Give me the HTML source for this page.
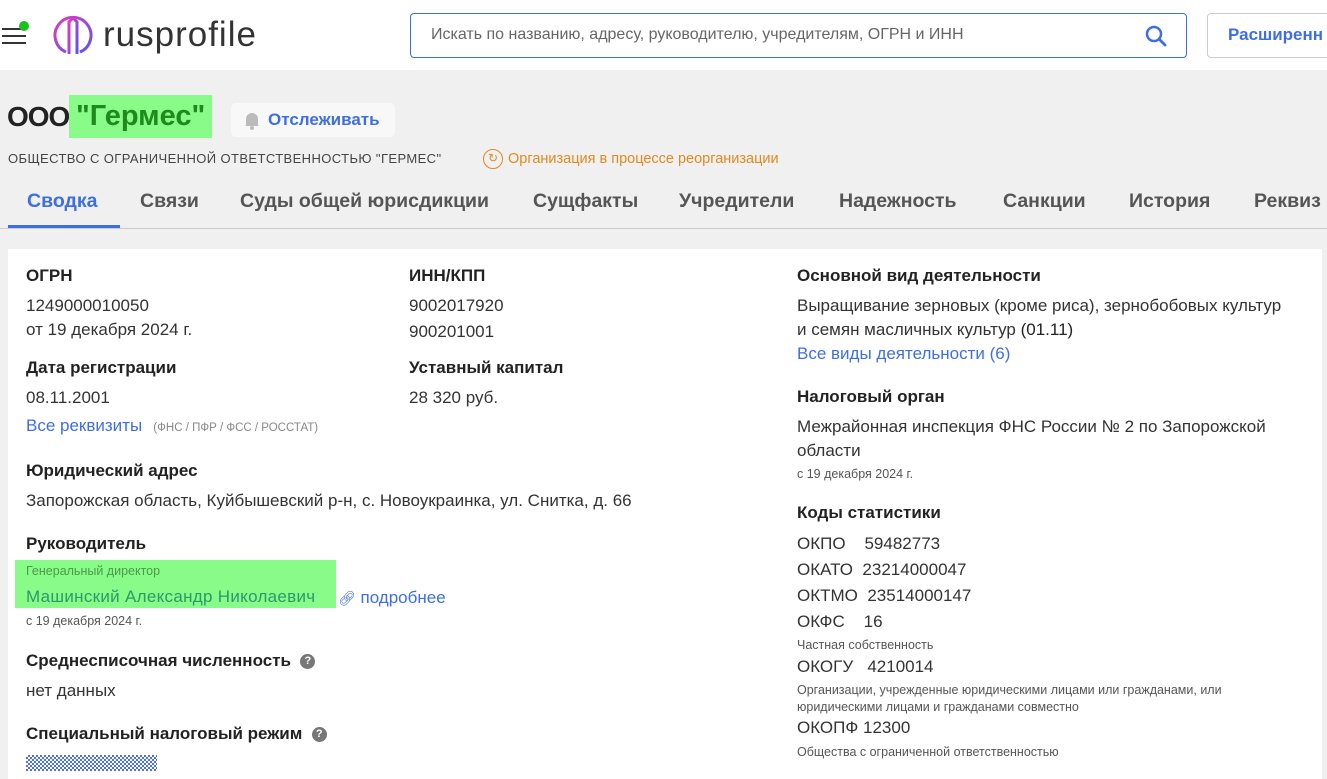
<!DOCTYPE html>
<html><head><meta charset="utf-8"><style>
*{margin:0;padding:0;box-sizing:border-box}
body{width:1327px;height:773px;overflow:hidden;background:#f0f0f0;font-family:"Liberation Sans","Noto Sans CJK SC",sans-serif;color:#222;position:relative}
.a{position:absolute;white-space:nowrap}
.h{font-weight:bold;font-size:17px;color:#222}
.t{font-size:17px;color:#333}
.s{font-size:12.5px;color:#555}
.l{color:#3d6fe0}
.tab{font-size:19.5px;font-weight:bold;color:#555;top:190px}
</style></head><body>
<div class="a" style="left:0;top:0;width:1327px;height:70px;background:#fff"></div>
<div class="a" style="left:2px;top:28px;width:24px;height:2px;background:#333"></div>
<div class="a" style="left:2px;top:35px;width:24px;height:2px;background:#333"></div>
<div class="a" style="left:2px;top:42px;width:24px;height:2px;background:#333"></div>
<div class="a" style="left:19px;top:21px;width:10px;height:10px;border-radius:50%;background:#1bc21b"></div>
<svg class="a" style="left:52px;top:14px" width="42" height="42" viewBox="0 0 42 42"><defs><linearGradient id="g" x1="0" y1="0" x2="1" y2="1"><stop offset="0" stop-color="#e63ab8"/><stop offset="1" stop-color="#5a55f0"/></linearGradient></defs><path d="M14 38 A18 18 0 1 1 28 38" fill="none" stroke="url(#g)" stroke-width="3"/><path d="M17 40 L17 8 L21 4 L25 8 L25 40" fill="none" stroke="url(#g)" stroke-width="3"/></svg>
<div class="a" style="left:103px;top:15px;font-size:35px;color:#333;letter-spacing:1px">rusprofile</div>
<div class="a" style="left:410px;top:13px;width:777px;height:45px;border:1px solid #3d6fe0;border-radius:4px;background:#fff"></div>
<div class="a" style="left:431px;top:26px;font-size:16px;color:#666">Искать по названию, адресу, руководителю, учредителям, ОГРН и ИНН</div>
<svg class="a" style="left:1144px;top:24px" width="24" height="24" viewBox="0 0 24 24"><circle cx="10" cy="10" r="7" fill="none" stroke="#3d6fe0" stroke-width="2.5"/><path d="M15 15 L21 21" stroke="#3d6fe0" stroke-width="2.8" stroke-linecap="round"/></svg>
<div class="a" style="left:1207px;top:13px;width:140px;height:45px;border:1px solid #ccc;border-radius:4px;background:#fff"></div>
<div class="a" style="left:1228px;top:25px;font-size:17px;font-weight:bold;color:#3d6fe0">Расширенн</div>

<div class="a" style="left:7px;top:101px;font-size:28px;font-weight:bold;color:#222;letter-spacing:-1px">ООО</div>
<div class="a" style="left:69px;top:95px;width:143px;height:43px;background:#88fb88"></div>
<div class="a" style="left:76px;top:100px;font-size:29px;font-weight:bold;color:#1e8a1e">"Гермес"</div>
<div class="a" style="left:231px;top:103px;width:164px;height:34px;background:#f8f8f8;border-radius:5px"></div>
<svg class="a" style="left:242px;top:110px" width="20" height="20" viewBox="0 0 20 20"><path d="M4 15 L4 9 A6 6 0 0 1 16 9 L16 15 L17 16 L3 16 Z" fill="#bbb"/><circle cx="10" cy="18" r="2" fill="#bbb"/></svg>
<div class="a" style="left:268px;top:110px;font-size:17px;font-weight:bold;color:#3d6fe0">Отслеживать</div>
<div class="a" style="left:8px;top:151px;font-size:13px;color:#444;letter-spacing:0.4px">ОБЩЕСТВО С ОГРАНИЧЕННОЙ ОТВЕТСТВЕННОСТЬЮ "ГЕРМЕС"</div>
<div class="a" style="left:483px;top:149px;width:20px;height:20px;border:1.5px solid #e08a1e;border-radius:50%;color:#e08a1e;font-size:12px;text-align:center;line-height:17px">↻</div>
<div class="a" style="left:508px;top:151px;font-size:14.5px;color:#e08a1e">Организация в процессе реорганизации</div>

<div class="a tab" style="left:27px;color:#3d6fe0">Сводка</div>
<div class="a" style="left:8px;top:225px;width:112px;height:3px;background:#3d6fe0"></div>
<div class="a tab" style="left:140px">Связи</div>
<div class="a tab" style="left:240px">Суды общей юрисдикции</div>
<div class="a tab" style="left:533px">Сущфакты</div>
<div class="a tab" style="left:679px">Учредители</div>
<div class="a tab" style="left:839px">Надежность</div>
<div class="a tab" style="left:1003px">Санкции</div>
<div class="a tab" style="left:1129px">История</div>
<div class="a tab" style="left:1254px">Реквиз</div>
<div class="a" style="left:0;top:228px;width:1327px;height:1px;background:#ccc"></div>

<div class="a" style="left:8px;top:249px;width:1314px;height:530px;background:#fff"></div>

<div class="a h" style="left:26px;top:266px">ОГРН</div>
<div class="a t" style="left:26px;top:296px">1249000010050</div>
<div class="a t" style="left:26px;top:320px">от 19 декабря 2024 г.</div>
<div class="a h" style="left:26px;top:358px">Дата регистрации</div>
<div class="a t" style="left:26px;top:388px">08.11.2001</div>
<div class="a t l" style="left:26px;top:416px">Все реквизиты <span style="font-size:11.5px;color:#888">&nbsp;&nbsp;(ФНС / ПФР / ФСС / РОССТАТ)</span></div>
<div class="a h" style="left:26px;top:461px">Юридический адрес</div>
<div class="a t" style="left:26px;top:491px">Запорожская область, Куйбышевский р-н, с. Новоукраинка, ул. Снитка, д. 66</div>
<div class="a h" style="left:26px;top:534px">Руководитель</div>
<div class="a" style="left:15px;top:560px;width:321px;height:48px;background:#88fb88"></div>
<div class="a s" style="left:26px;top:564px;color:#4a9a4a">Генеральный директор</div>
<div class="a t" style="left:26px;top:587px;color:#2a9a6a;letter-spacing:0.3px">Машинский Александр Николаевич</div>
<div class="a t l" style="left:338px;top:588px"><span style="font-size:14px">🔗︎</span> подробнее</div>
<div class="a s" style="left:26px;top:614px">с 19 декабря 2024 г.</div>
<div class="a h" style="left:26px;top:651px">Среднесписочная численность&nbsp; <span style="display:inline-block;width:15px;height:15px;border-radius:50%;background:#777;color:#fff;font-size:11px;text-align:center;line-height:15px;vertical-align:2px">?</span></div>
<div class="a t" style="left:26px;top:681px">нет данных</div>
<div class="a h" style="left:26px;top:724px">Специальный налоговый режим&nbsp; <span style="display:inline-block;width:15px;height:15px;border-radius:50%;background:#777;color:#fff;font-size:11px;text-align:center;line-height:15px;vertical-align:2px">?</span></div>
<div class="a" style="left:26px;top:755px;width:131px;height:16px;background:repeating-conic-gradient(#4a6ff0 0 25%,#fff 0 50%) 0 0/4px 4px"></div>

<div class="a h" style="left:409px;top:266px">ИНН/КПП</div>
<div class="a t" style="left:409px;top:296px">9002017920</div>
<div class="a t" style="left:409px;top:322px">900201001</div>
<div class="a h" style="left:409px;top:358px">Уставный капитал</div>
<div class="a t" style="left:409px;top:388px">28 320 руб.</div>

<div class="a h" style="left:797px;top:266px">Основной вид деятельности</div>
<div class="a t" style="left:797px;top:296px">Выращивание зерновых (кроме риса), зернобобовых культур</div>
<div class="a t" style="left:797px;top:320px">и семян масличных культур <span style="color:#222">(01.11)</span></div>
<div class="a t l" style="left:797px;top:344px">Все виды деятельности (6)</div>
<div class="a h" style="left:797px;top:387px">Налоговый орган</div>
<div class="a t" style="left:797px;top:417px">Межрайонная инспекция ФНС России № 2 по Запорожской</div>
<div class="a t" style="left:797px;top:441px">области</div>
<div class="a s" style="left:797px;top:467px">с 19 декабря 2024 г.</div>
<div class="a h" style="left:797px;top:503px">Коды статистики</div>
<div class="a t" style="left:797px;top:534px">ОКПО&nbsp;&nbsp;&nbsp;&nbsp;59482773</div>
<div class="a t" style="left:797px;top:560px">ОКАТО&nbsp;&nbsp;23214000047</div>
<div class="a t" style="left:797px;top:586px">ОКТМО&nbsp;&nbsp;23514000147</div>
<div class="a t" style="left:797px;top:612px">ОКФС&nbsp;&nbsp;&nbsp;&nbsp;16</div>
<div class="a s" style="left:797px;top:638px">Частная собственность</div>
<div class="a t" style="left:797px;top:657px">ОКОГУ&nbsp;&nbsp;&nbsp;4210014</div>
<div class="a s" style="left:797px;top:683px">Организации, учрежденные юридическими лицами или гражданами, или</div>
<div class="a s" style="left:797px;top:700px">юридическими лицами и гражданами совместно</div>
<div class="a t" style="left:797px;top:718px">ОКОПФ&nbsp;12300</div>
<div class="a s" style="left:797px;top:745px">Общества с ограниченной ответственностью</div>
</body></html>
